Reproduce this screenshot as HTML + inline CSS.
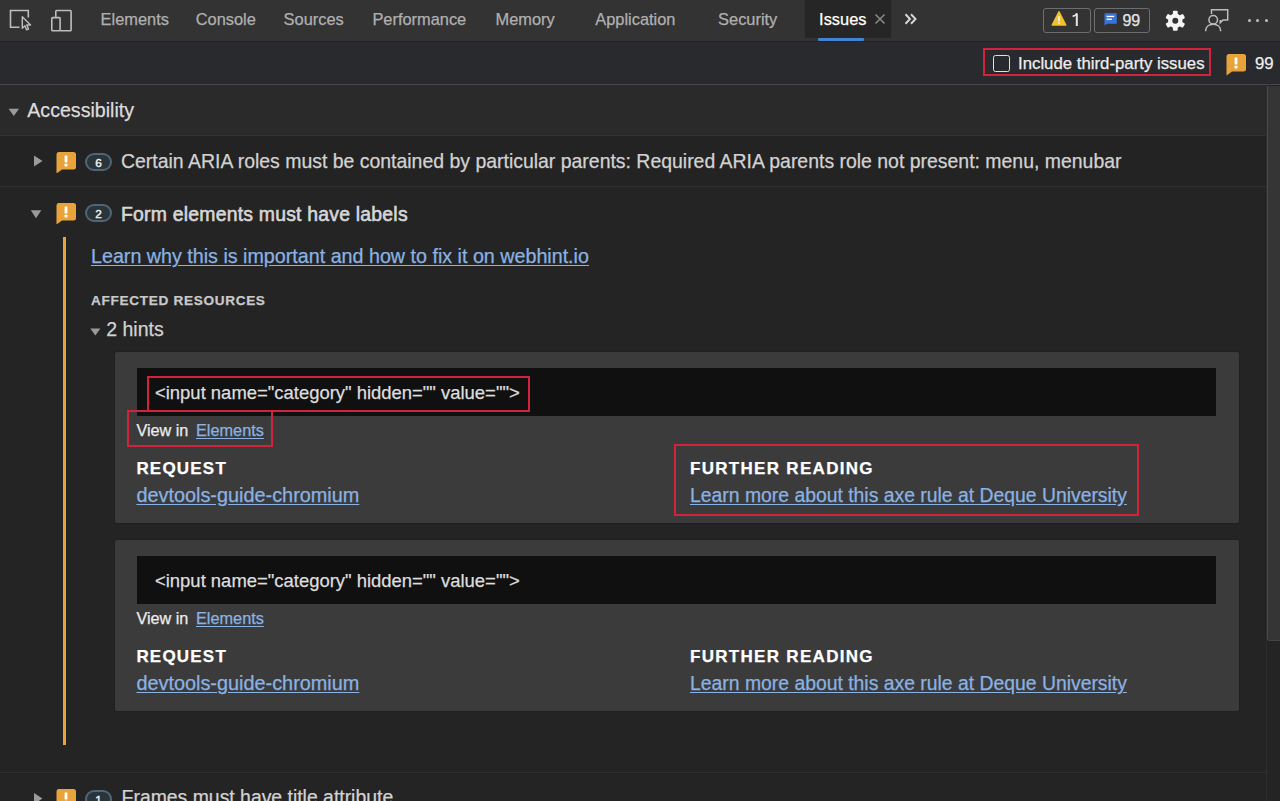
<!DOCTYPE html>
<html><head><meta charset="utf-8"><style>
html,body{margin:0;padding:0;width:1280px;height:801px;overflow:hidden;background:#242424;}
body{position:relative;font-family:"Liberation Sans",sans-serif;}
.t{position:absolute;white-space:nowrap;-webkit-text-stroke:0.25px currentColor;}
.r{position:absolute;}
</style></head><body>
<div class="r" style="left:0px;top:0px;width:1280px;height:41px;background:#333333;"></div>
<div class="r" style="left:0px;top:41px;width:1280px;height:1px;background:#222326;"></div>
<svg class="r" style="left:0;top:0" width="40" height="40" viewBox="0 0 40 40">
<path d="M19.5 27.3H10.5V10.5H28.3V17.5" fill="none" stroke="#bdbdbd" stroke-width="1.6"/>
<path d="M22.3 16.8L22.3 28.2L24.9 25.7L26.6 29.8L28.5 29L26.8 25L30.6 25Z" fill="#333" stroke="#bdbdbd" stroke-width="1.4" stroke-linejoin="round"/>
</svg>
<svg class="r" style="left:40px;top:0" width="40" height="40" viewBox="40 0 40 40">
<path d="M55.8 17V11.3C55.8 10.8 56.1 10.5 56.6 10.5H70.3C70.8 10.5 71.1 10.8 71.1 11.3V30C71.1 30.5 70.8 30.8 70.3 30.8H60.3" fill="none" stroke="#bdbdbd" stroke-width="1.6"/>
<rect x="51.8" y="17.6" width="8.3" height="13.2" rx="0.8" fill="none" stroke="#bdbdbd" stroke-width="1.6"/>
</svg>
<div class="t " style="left:100.6px;top:9.58px;font-size:16.4px;line-height:19.68px;color:#b0b0b0;">Elements</div>
<div class="t " style="left:195.7px;top:9.58px;font-size:16.4px;line-height:19.68px;color:#b0b0b0;">Console</div>
<div class="t " style="left:283.6px;top:9.58px;font-size:16.4px;line-height:19.68px;color:#b0b0b0;">Sources</div>
<div class="t " style="left:372.4px;top:9.58px;font-size:16.4px;line-height:19.68px;color:#b0b0b0;">Performance</div>
<div class="t " style="left:495.5px;top:9.58px;font-size:16.4px;line-height:19.68px;color:#b0b0b0;">Memory</div>
<div class="t " style="left:595.3px;top:9.58px;font-size:16.4px;line-height:19.68px;color:#b0b0b0;">Application</div>
<div class="t " style="left:718.1px;top:9.58px;font-size:16.4px;line-height:19.68px;color:#b0b0b0;">Security</div>
<div class="r" style="left:805px;top:0px;width:86px;height:38px;background:#262626;"></div>
<div class="r" style="left:818px;top:37.5px;width:46px;height:3.0px;background:#4283d6;border-radius:1px;"></div>
<div class="t " style="left:819.1px;top:9.58px;font-size:16.4px;line-height:19.68px;color:#ffffff;">Issues</div>
<svg class="r" style="left:870px;top:8px" width="20" height="22" viewBox="0 0 20 22">
<path d="M5.5 6.5L14.5 15.5M14.5 6.5L5.5 15.5" stroke="#8a8a8a" stroke-width="1.5"/></svg>
<svg class="r" style="left:900px;top:8px" width="22" height="22" viewBox="0 0 22 22">
<path d="M5.5 6.3L10 11L5.5 15.7M11 6.3L15.5 11L11 15.7" fill="none" stroke="#d6d6d6" stroke-width="2"/></svg>
<div class="r" style="left:1043px;top:8px;width:48px;height:25px;box-sizing:border-box;border:1.2px solid #6e6e6e;border-radius:3px;"></div>
<div class="r" style="left:1094px;top:8px;width:56px;height:25px;box-sizing:border-box;border:1.2px solid #6e6e6e;border-radius:3px;"></div>
<svg class="r" style="left:1050px;top:10px" width="18" height="18" viewBox="0 0 18 18">
<path d="M9 1.9L15.7 15H2.3Z" fill="#f0c02e" stroke="#f0c02e" stroke-width="1.6" stroke-linejoin="round"/>
<rect x="8.25" y="6.2" width="1.5" height="5" fill="#fff"/><rect x="8.25" y="12.3" width="1.5" height="1.5" fill="#fff"/></svg>
<svg class="r" style="left:1070px;top:10px" width="12" height="18" viewBox="0 0 12 18">
<path d="M6.8 16V3.6" stroke="#e6e6e6" stroke-width="2"/><path d="M6.9 3.4Q5.6 5.9 2.6 6.4" fill="none" stroke="#e6e6e6" stroke-width="1.7"/></svg>
<svg class="r" style="left:1102px;top:11px" width="16" height="16" viewBox="0 0 16 16">
<path d="M3.2 2.2H14.3Q14.8 2.2 14.8 2.7V12.3Q14.8 12.8 14.3 12.8H5L2.5 14.5V2.9Q2.5 2.2 3.2 2.2Z" fill="#3b74d9"/>
<rect x="4.6" y="4.8" width="7.6" height="1.3" fill="#fff"/><rect x="4.6" y="7.6" width="5.2" height="1.3" fill="#fff"/></svg>
<div class="t " style="left:1122.4px;top:11.06px;font-size:16px;line-height:19.2px;color:#e6e6e6;">99</div>
<svg class="r" style="left:1163px;top:9px" width="24" height="24" viewBox="0 0 24 24">
<g transform="translate(12.3 11.8)" fill="#f5f5f5">
<circle r="7.2"/>
<rect x="-2.4" y="-10" width="4.8" height="20" rx="1"/>
<rect x="-2.4" y="-10" width="4.8" height="20" rx="1" transform="rotate(60)"/>
<rect x="-2.4" y="-10" width="4.8" height="20" rx="1" transform="rotate(120)"/>
<circle r="3" fill="#333"/>
</g></svg>
<svg class="r" style="left:1200px;top:5px" width="32" height="30" viewBox="1200 5 32 30">
<path d="M1211.5 14V9.8H1227.7V19.9H1223L1220.3 22.6V20" fill="none" stroke="#bdbdbd" stroke-width="1.5"/>
<circle cx="1213.2" cy="19.8" r="4.3" fill="#333" stroke="#bdbdbd" stroke-width="1.5"/>
<path d="M1205.6 31.3C1205.6 26.8 1209 24.3 1213.2 24.3C1217.4 24.3 1220.7 26.8 1220.7 31.3" fill="none" stroke="#bdbdbd" stroke-width="1.5"/>
</svg>
<div class="r" style="left:1247.7px;top:19.2px;width:3.0px;height:3.0px;background:#bdbdbd;border-radius:50%;"></div>
<div class="r" style="left:1256.2px;top:19.2px;width:3.0px;height:3.0px;background:#bdbdbd;border-radius:50%;"></div>
<div class="r" style="left:1265.1px;top:19.2px;width:3.0px;height:3.0px;background:#bdbdbd;border-radius:50%;"></div>
<div class="r" style="left:0px;top:42px;width:1280px;height:42px;background:#292a2d;"></div>
<div class="r" style="left:0px;top:84px;width:1280px;height:1px;background:#48494b;"></div>
<div class="r" style="left:983.2px;top:48px;width:227.79999999999995px;height:28px;box-sizing:border-box;border:2.8px solid #d0233c;"></div>
<div class="r" style="left:993px;top:55px;width:17px;height:16.799999999999997px;box-sizing:border-box;border:1.9px solid #e2e2e2;border-radius:2.5px;"></div>
<div class="t " style="left:1018px;top:53.50px;font-size:16.8px;line-height:20.16px;color:#eeeeee;">Include third-party issues</div>
<svg class="r" style="left:1225.6px;top:54px" width="20" height="21.5" viewBox="0 0 20 21.5">
<path d="M2.5 0H17.5Q20 0 20 2.5V15Q20 17.5 17.5 17.5H6L0.5 21.5V2.5Q0.5 0 2.5 0Z" fill="#e8a33b"/>
<rect x="8.6" y="3.6" width="2.8" height="6.8" rx="0.4" fill="#fff"/><rect x="8.6" y="11.8" width="2.8" height="2.6" rx="0.4" fill="#fff"/></svg>
<div class="t " style="left:1255px;top:53.50px;font-size:16.8px;line-height:20.16px;color:#eeeeee;">99</div>
<div class="r" style="left:0px;top:85px;width:1280px;height:716px;background:#242424;"></div>
<div class="r" style="left:0px;top:85px;width:1266px;height:49.80000000000001px;background:#2a2a2a;"></div>
<div class="r" style="left:0px;top:134.8px;width:1266px;height:1.0px;background:#323232;"></div>
<svg class="r" style="left:6px;top:106px" width="16" height="12" viewBox="0 0 16 12">
<path d="M2.6 2.75H13L7.8 10Z" fill="#9a9a9a"/></svg>
<div class="t " style="left:27.3px;top:99.25px;font-size:19.6px;line-height:23.52px;color:#dcdcdc;">Accessibility</div>
<div class="r" style="left:0px;top:135.8px;width:1266px;height:50.19999999999999px;background:#232323;"></div>
<div class="r" style="left:0px;top:186px;width:1266px;height:1px;background:#2f2f2f;"></div>
<svg class="r" style="left:32px;top:154px" width="12" height="14" viewBox="0 0 12 14">
<path d="M2 1.6L10.5 7L2 12.5Z" fill="#9a9a9a"/></svg>
<svg class="r" style="left:56.2px;top:151.7px" width="20" height="21.5" viewBox="0 0 20 21.5">
<path d="M2.5 0H17.5Q20 0 20 2.5V15Q20 17.5 17.5 17.5H6L0.5 21.5V2.5Q0.5 0 2.5 0Z" fill="#e8a33b"/>
<rect x="8.6" y="3.6" width="2.8" height="6.8" rx="0.4" fill="#fff"/><rect x="8.6" y="11.8" width="2.8" height="2.6" rx="0.4" fill="#fff"/></svg>
<div class="r" style="left:85px;top:153.3px;width:26.799999999999997px;height:17.5px;box-sizing:border-box;border:2.2px solid #526573;border-radius:9px;background:#2a343b;"></div>
<div class="t " style="left:95.2px;top:156.03px;font-size:11.8px;line-height:14.16px;color:#f0f0f0;-webkit-text-stroke:0.4px currentColor;">6</div>
<div class="t " style="left:121px;top:149.70px;font-size:19.44px;line-height:23.33px;color:#d2d2d2;">Certain ARIA roles must be contained by particular parents: Required ARIA parents role not present: menu, menubar</div>
<svg class="r" style="left:29px;top:208px" width="14" height="12" viewBox="0 0 14 12">
<path d="M1.8 2.3H12.3L7.05 10.2Z" fill="#9a9a9a"/></svg>
<svg class="r" style="left:56.4px;top:202.7px" width="20" height="21.5" viewBox="0 0 20 21.5">
<path d="M2.5 0H17.5Q20 0 20 2.5V15Q20 17.5 17.5 17.5H6L0.5 21.5V2.5Q0.5 0 2.5 0Z" fill="#e8a33b"/>
<rect x="8.6" y="3.6" width="2.8" height="6.8" rx="0.4" fill="#fff"/><rect x="8.6" y="11.8" width="2.8" height="2.6" rx="0.4" fill="#fff"/></svg>
<div class="r" style="left:85px;top:204px;width:26.799999999999997px;height:18px;box-sizing:border-box;border:2.2px solid #526573;border-radius:9px;background:#2a343b;"></div>
<div class="t " style="left:95.2px;top:207.23px;font-size:11.8px;line-height:14.16px;color:#f0f0f0;-webkit-text-stroke:0.4px currentColor;">2</div>
<div class="t " style="left:121px;top:202.74px;font-size:19.4px;line-height:23.28px;color:#d6d6d6;letter-spacing:0.22px;-webkit-text-stroke:0.6px currentColor;">Form elements must have labels</div>
<div class="r" style="left:63px;top:237px;width:3px;height:507.5px;background:#e8a33b;"></div>
<div class="t " style="left:91px;top:245.26px;font-size:19.69px;line-height:23.63px;color:#8ab2e2;text-decoration:underline;text-underline-offset:2px;">Learn why this is important and how to fix it on webhint.io</div>
<div class="t " style="left:91px;top:293.33px;font-size:13.6px;line-height:16.32px;color:#c9c9c9;font-weight:bold;letter-spacing:0.68px;">AFFECTED RESOURCES</div>
<svg class="r" style="left:88px;top:326px" width="14" height="12" viewBox="0 0 14 12">
<path d="M2.3 2.6H12.4L7.35 9.6Z" fill="#9a9a9a"/></svg>
<div class="t " style="left:106.2px;top:318.24px;font-size:19.5px;line-height:23.4px;color:#d2d2d2;">2 hints</div>
<div class="r" style="left:114.5px;top:351.5px;width:1124.0px;height:171.0px;background:#3b3b3b;border-radius:2px;box-shadow:0 0 2px rgba(0,0,0,0.35);"></div>
<div class="r" style="left:136.8px;top:368px;width:1079.7px;height:47.60000000000002px;background:#101010;"></div>
<div class="t " style="left:155px;top:381.54px;font-size:18.45px;line-height:22.14px;color:#dedede;">&lt;input name="category" hidden="" value=""&gt;</div>
<div class="t " style="left:136.4px;top:420.67px;font-size:16.2px;line-height:19.44px;color:#ececec;">View in</div>
<div class="t " style="left:196px;top:420.57px;font-size:16.3px;line-height:19.56px;color:#8ab2e2;text-decoration:underline;text-underline-offset:2px;">Elements</div>
<div class="t " style="left:136.4px;top:459.21px;font-size:17px;line-height:20.4px;color:#ffffff;font-weight:bold;letter-spacing:1.2px;">REQUEST</div>
<div class="t " style="left:136.4px;top:483.70px;font-size:19.86px;line-height:23.83px;color:#8ab2e2;text-decoration:underline;text-underline-offset:1.5px;">devtools-guide-chromium</div>
<div class="t " style="left:690px;top:459.21px;font-size:17px;line-height:20.4px;color:#ffffff;font-weight:bold;letter-spacing:1.3px;">FURTHER READING</div>
<div class="t " style="left:690px;top:484.18px;font-size:19.36px;line-height:23.23px;color:#8ab2e2;text-decoration:underline;text-underline-offset:1.5px;">Learn more about this axe rule at Deque University</div>
<div class="r" style="left:146.8px;top:376.4px;width:383.40000000000003px;height:35.60000000000002px;box-sizing:border-box;border:2.6px solid #d0233c;"></div>
<div class="r" style="left:127.4px;top:410.2px;width:145.20000000000002px;height:36.80000000000001px;box-sizing:border-box;border:2.6px solid #d0233c;"></div>
<div class="r" style="left:673.6px;top:443.6px;width:465.80000000000007px;height:72.39999999999998px;box-sizing:border-box;border:2.6px solid #d0233c;"></div>
<div class="r" style="left:114.5px;top:539.7px;width:1124.0px;height:171.0px;background:#3b3b3b;border-radius:2px;box-shadow:0 0 2px rgba(0,0,0,0.35);"></div>
<div class="r" style="left:136.8px;top:556.2px;width:1079.7px;height:47.59999999999991px;background:#101010;"></div>
<div class="t " style="left:155px;top:569.74px;font-size:18.45px;line-height:22.14px;color:#dedede;">&lt;input name="category" hidden="" value=""&gt;</div>
<div class="t " style="left:136.4px;top:608.87px;font-size:16.2px;line-height:19.44px;color:#ececec;">View in</div>
<div class="t " style="left:196px;top:608.77px;font-size:16.3px;line-height:19.56px;color:#8ab2e2;text-decoration:underline;text-underline-offset:2px;">Elements</div>
<div class="t " style="left:136.4px;top:647.41px;font-size:17px;line-height:20.4px;color:#ffffff;font-weight:bold;letter-spacing:1.2px;">REQUEST</div>
<div class="t " style="left:136.4px;top:671.90px;font-size:19.86px;line-height:23.83px;color:#8ab2e2;text-decoration:underline;text-underline-offset:1.5px;">devtools-guide-chromium</div>
<div class="t " style="left:690px;top:647.41px;font-size:17px;line-height:20.4px;color:#ffffff;font-weight:bold;letter-spacing:1.3px;">FURTHER READING</div>
<div class="t " style="left:690px;top:672.38px;font-size:19.36px;line-height:23.23px;color:#8ab2e2;text-decoration:underline;text-underline-offset:1.5px;">Learn more about this axe rule at Deque University</div>
<div class="r" style="left:0px;top:772px;width:1266px;height:1px;background:#2f2f2f;"></div>
<svg class="r" style="left:32px;top:790px" width="12" height="14" viewBox="0 0 12 14">
<path d="M2 3.1L10.5 8.5L2 14Z" fill="#9a9a9a"/></svg>
<svg class="r" style="left:56.4px;top:788.7px" width="20" height="21.5" viewBox="0 0 20 21.5">
<path d="M2.5 0H17.5Q20 0 20 2.5V15Q20 17.5 17.5 17.5H6L0.5 21.5V2.5Q0.5 0 2.5 0Z" fill="#e8a33b"/>
<rect x="8.6" y="3.6" width="2.8" height="6.8" rx="0.4" fill="#fff"/><rect x="8.6" y="11.8" width="2.8" height="2.6" rx="0.4" fill="#fff"/></svg>
<div class="r" style="left:85px;top:790px;width:26.799999999999997px;height:17.5px;box-sizing:border-box;border:2.2px solid #526573;border-radius:9px;background:#2a343b;"></div>
<div class="t " style="left:95.2px;top:792.73px;font-size:11.8px;line-height:14.16px;color:#f0f0f0;-webkit-text-stroke:0.4px currentColor;">1</div>
<div class="t " style="left:121.6px;top:786.14px;font-size:19.4px;line-height:23.28px;color:#d2d2d2;">Frames must have title attribute</div>
<div class="r" style="left:1266px;top:85px;width:14px;height:716px;background:#242424;"></div>
<div class="r" style="left:1266px;top:85px;width:1px;height:716px;background:#2d2d2d;"></div>
<div class="r" style="left:1266.5px;top:86px;width:13.5px;height:554.5px;background:#353535;border-left:1px solid #4a4a4a;border-bottom:1px solid #454545;border-bottom-left-radius:3px;box-sizing:border-box;"></div>
</body></html>
